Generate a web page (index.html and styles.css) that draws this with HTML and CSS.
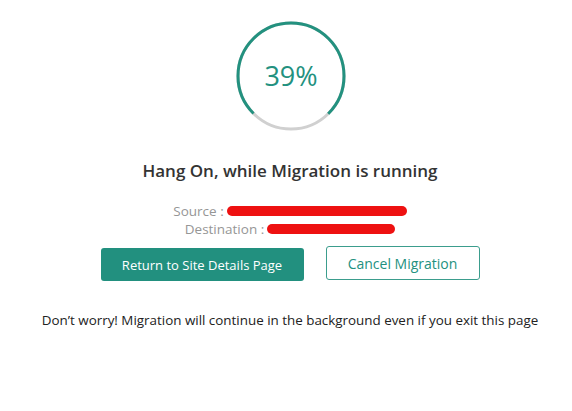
FILE: index.html
```html
<!DOCTYPE html>
<html>
<head>
<meta charset="utf-8">
<link rel="stylesheet" href="styles.css">
</head>
<body>
<main class="page">
  <div class="progress">
    <svg class="ring" width="112" height="112" viewBox="0 0 112 112">
      <circle cx="56" cy="56" r="53" fill="none" stroke="#d0d0d0" stroke-width="3"/>
      <circle cx="56" cy="56" r="53" fill="none" stroke="#23917f" stroke-width="3"
        stroke-dasharray="249.76 333.01" transform="rotate(135 56 56)"/>
    </svg>
    <span class="pct">39%</span>
  </div>
  <h1 class="title">Hang On, while Migration is running</h1>
  <div class="details">
    <div class="row">Source : <span class="redact src"></span></div>
    <div class="row">Destination : <span class="redact dst"></span></div>
  </div>
  <div class="actions">
    <button class="btn primary">Return to Site Details Page</button>
    <button class="btn secondary">Cancel Migration</button>
  </div>
  <p class="note">Don’t worry! Migration will continue in the background even if you exit this page</p>
</main>
</body>
</html>
```
FILE: styles.css
```css
html, body { margin: 0; padding: 0; background: #fff; }
body { font-family: "Open Sans", "Noto Sans", sans-serif; color: #333; }
.page {
  width: 572px;
  box-sizing: border-box;
  padding: 20px 0 0 8px;
  display: flex;
  flex-direction: column;
  align-items: center;
}
.progress {
  position: relative;
  width: 112px;
  height: 112px;
  margin-left: 2px;
}
.ring { display: block; }
.pct {
  position: absolute;
  inset: 0;
  display: flex;
  align-items: center;
  justify-content: center;
  font-size: 27px;
  font-weight: 400;
  color: #23917f;
  padding-bottom: 2px;
}
.title {
  margin: 27px 0 0;
  font-size: 17px;
  font-weight: 600;
  line-height: 24px;
  color: #333;
}
.details {
  margin-top: 19px;
  display: flex;
  flex-direction: column;
  align-items: center;
  font-size: 13.5px;
  line-height: 18px;
  font-weight: 400;
  color: #969696;
}
.row { display: flex; align-items: center; }
.redact {
  display: inline-block;
  background: #ee1111;
  border-radius: 5px;
  height: 10px;
  margin-left: 3px;
}
.src { width: 180px; }
.dst { width: 128px; }
.actions {
  margin-top: 8px;
  display: flex;
  gap: 22px;
  align-items: flex-start;
}
.btn {
  font-family: inherit;
  border-radius: 3px;
  cursor: pointer;
}
.primary {
  margin-top: 2px;
  width: 203px;
  height: 33px;
  font-size: 13px;
  background: #22907f;
  border: none;
  color: #fff;
}
.secondary {
  width: 154px;
  height: 34px;
  font-size: 14px;
  background: #fff;
  border: 1px solid #3b9d8d;
  color: #23917f;
}
.note {
  margin: 30px 0 0;
  font-size: 13.4px;
  font-weight: 400;
  color: #222;
}
```
